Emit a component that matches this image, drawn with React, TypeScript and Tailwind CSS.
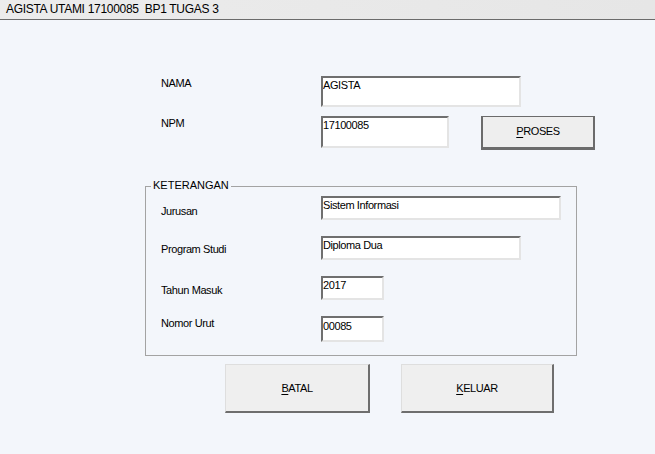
const sunken =
  "border-t-2 border-l-2 border-b-2 border-r-2 border-t-[#6f6f6f] border-l-[#6f6f6f] border-b-[#e4e4e4] border-r-[#e4e4e4] bg-white leading-[13px] pt-[1px] whitespace-nowrap overflow-hidden";

function Box({ value, className }: { value: string; className: string }) {
  return <div className={`${sunken} ${className}`}>{value}</div>;
}

function Label({ text, className = "" }: { text: string; className?: string }) {
  return <div className={`w-[160px] shrink-0 leading-[13px] ${className}`}>{text}</div>;
}

export default function App() {
  return (
    <div className="w-[655px] h-[454px] overflow-hidden bg-[#f3f6fb] text-black font-['Liberation_Sans',Arial,sans-serif] text-[11px] tracking-[-0.4px]">
      <div className="h-[20px] border-b border-[#6b6b6b] bg-gradient-to-r from-[#ececec] via-[#e9e9e9] to-[#e6e6e6] pl-[6px] text-[12px] leading-[19px] tracking-[-0.3px] whitespace-pre">
        AGISTA UTAMI 17100085  BP1 TUGAS 3
      </div>

      <div className="pl-[161px]">
        <div className="mt-[56px] flex items-start">
          <Label text="NAMA" className="pt-[1px]" />
          <Box value="AGISTA" className="w-[200px] h-[31px]" />
        </div>
        <div className="mt-[9px] flex items-start">
          <Label text="NPM" className="pt-[1px]" />
          <Box value="17100085" className="w-[128px] h-[32px]" />
          <button className="ml-[32px] w-[114px] h-[34px] bg-[#eeeeee] border-t border-l-2 border-r-2 border-b-[3px] border-[#6b6b6b] leading-[13px] pb-[2px]">
            <span className="underline underline-offset-2">P</span>ROSES
          </button>
        </div>
      </div>

      <div className="pl-[145px] mt-[36px]">
        <div className="relative w-[432px] h-[170px] border border-[#a3a3a3] pl-[15px] pt-[9px]">
          <span className="absolute left-[5px] top-[-8px] px-[2px] bg-[#f3f6fb] leading-[13px] tracking-normal">
            KETERANGAN
          </span>
          <div className="flex items-start">
            <Label text="Jurusan" className="pt-[9px]" />
            <Box value="Sistem Informasi" className="w-[240px] h-[24px]" />
          </div>
          <div className="mt-[16px] flex items-start">
            <Label text="Program Studi" className="pt-[7px]" />
            <Box value="Diploma Dua" className="w-[200px] h-[24px]" />
          </div>
          <div className="mt-[16px] flex items-start">
            <Label text="Tahun Masuk" className="pt-[8px]" />
            <Box value="2017" className="w-[63px] h-[24px]" />
          </div>
          <div className="mt-[16px] flex items-start">
            <Label text="Nomor Urut" className="pt-[1px]" />
            <Box value="00085" className="w-[63px] h-[26px] pt-[2px]" />
          </div>
        </div>
      </div>

      <div className="pl-[225px] mt-[8px] flex">
        <button className="w-[145px] h-[49px] bg-[#efefef] border-t border-l border-r-2 border-b-2 border-t-[#dedede] border-l-[#dedede] border-r-[#6e6e6e] border-b-[#6e6e6e] leading-[13px]">
          <span className="underline underline-offset-2">B</span>ATAL
        </button>
        <button className="ml-[31px] w-[153px] h-[49px] bg-[#efefef] border-t border-l border-r-2 border-b-2 border-t-[#dedede] border-l-[#dedede] border-r-[#6e6e6e] border-b-[#6e6e6e] leading-[13px]">
          <span className="underline underline-offset-2">K</span>ELUAR
        </button>
      </div>
    </div>
  );
}
